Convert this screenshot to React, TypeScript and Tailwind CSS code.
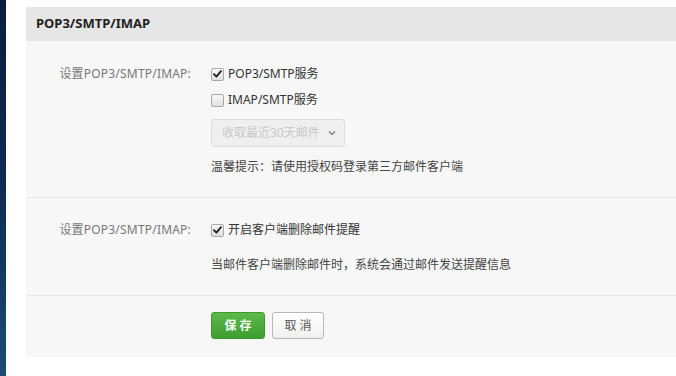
import React from "react";

const font = { fontFamily: '"Microsoft YaHei", "Noto Sans", "Noto Sans CJK SC", sans-serif' };

function Check({ checked }: { checked: boolean }) {
  return (
    <span className="inline-flex h-[13px] w-[13px] items-center justify-center rounded-[2px] border border-[#a8a8a8] bg-gradient-to-b from-[#f8f8f8] to-[#e0e0e0] shrink-0">
      {checked && (
        <svg width="9" height="8" viewBox="0 0 9 8">
          <path d="M1 4.2 L3.4 6.6 L8 1.2" fill="none" stroke="#222" strokeWidth="1.9" strokeLinecap="round" strokeLinejoin="round" />
        </svg>
      )}
    </span>
  );
}

export default function App() {
  return (
    <div className="flex h-[376px] w-[676px] bg-white overflow-hidden" style={font}>
      <div className="w-[6px] h-full bg-gradient-to-b from-[#0b1c40] via-[#0d2b55] to-[#1a4d76]" />
      <div className="flex-1 pl-[20px] pt-[7px]">
        <div className="h-[350px] bg-[#f7f7f7] flex flex-col">
          <div className="h-[34px] bg-[#e6e6e6] pl-[10px] flex items-center text-[13px] font-bold text-[#222]">
            POP3/SMTP/IMAP
          </div>
          <div className="flex border-b border-[#e8e8e8] pt-[20px] pb-[20px]">
            <div className="w-[165px] text-right text-[12px] text-[#777] leading-[26px] tracking-[0.2px]">设置POP3/SMTP/IMAP:</div>
            <div className="ml-[20px] flex flex-col text-[12px] text-[#333]">
              <label className="flex items-center h-[26px] gap-[4px]"><Check checked /> POP3/SMTP服务</label>
              <label className="flex items-center h-[26px] gap-[4px]"><Check checked={false} /> IMAP/SMTP服务</label>
              <div className="mt-[6px] flex h-[28px] w-[134px] items-center rounded-[3px] border border-[#dcdcdc] bg-[#efefef] pl-[10px] text-[12px] text-[#c8c8c8]">
                收取最近30天邮件
                <svg className="ml-[8px]" width="8" height="6" viewBox="0 0 8 6">
                  <path d="M1 1.5 L4 4.5 L7 1.5" fill="none" stroke="#777" strokeWidth="1.2" />
                </svg>
              </div>
              <div className="mt-[10px] leading-[20px] text-[#444]">温馨提示：请使用授权码登录第三方邮件客户端</div>
            </div>
          </div>
          <div className="flex border-b border-[#e8e8e8] pt-[19px] pb-[20px]">
            <div className="w-[165px] text-right text-[12px] text-[#777] leading-[26px] tracking-[0.2px]">设置POP3/SMTP/IMAP:</div>
            <div className="ml-[20px] flex flex-col text-[12px] text-[#333]">
              <label className="flex items-center h-[26px] gap-[4px]"><Check checked /> 开启客户端删除邮件提醒</label>
              <div className="mt-[12px] leading-[20px] text-[#444]">当邮件客户端删除邮件时，系统会通过邮件发送提醒信息</div>
            </div>
          </div>
          <div className="flex pt-[16px] pl-[185px] gap-[7px]">
            <button className="h-[27px] w-[54px] rounded-[3px] border border-[#3b9a2c] bg-gradient-to-b from-[#5cb94a] to-[#3f9e31] text-[12px] font-bold text-white tracking-[3px] pl-[3px]">保存</button>
            <button className="h-[27px] w-[52px] rounded-[3px] border border-[#b8b8b8] bg-gradient-to-b from-white to-[#f0f0f0] text-[12px] text-[#555] tracking-[3px] pl-[3px]">取消</button>
          </div>
        </div>
      </div>
    </div>
  );
}
